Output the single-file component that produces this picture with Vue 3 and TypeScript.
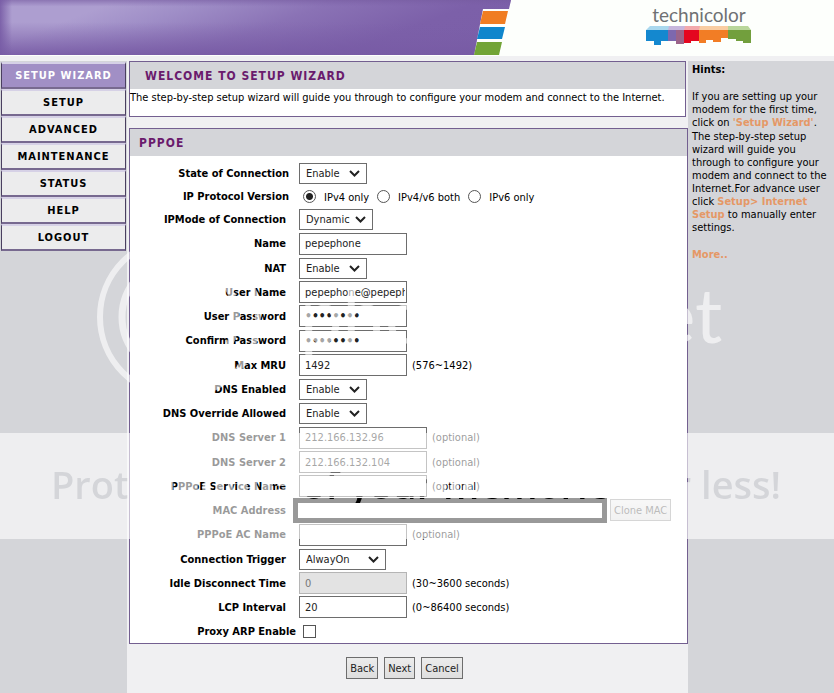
<script setup lang="ts">
import { reactive } from 'vue'

type Kind = 'select' | 'text' | 'password' | 'radio' | 'checkbox' | 'mac'

interface Field {
  id: string
  label: string
  kind: Kind
  size?: 'small' | 'medium' | 'large' | 'wide'
  options?: string[]
  note?: string
  disabled?: boolean
  gap?: 'near' | 'tight'
}

const menu = ['SETUP WIZARD', 'SETUP', 'ADVANCED', 'MAINTENANCE', 'STATUS', 'HELP', 'LOGOUT']

const fields: Field[] = [
  { id: 'state', label: 'State of Connection', kind: 'select', size: 'small', options: ['Enable', 'Disable'], gap: 'near' },
  { id: 'ipver', label: 'IP Protocol Version', kind: 'radio', options: ['IPv4 only', 'IPv4/v6 both', 'IPv6 only'], gap: 'near' },
  { id: 'ipmode', label: 'IPMode of Connection', kind: 'select', size: 'medium', options: ['Dynamic', 'Static'] },
  { id: 'name', label: 'Name', kind: 'text' },
  { id: 'nat', label: 'NAT', kind: 'select', size: 'small', options: ['Enable', 'Disable'] },
  { id: 'user', label: 'User Name', kind: 'text' },
  { id: 'pass', label: 'User Password', kind: 'password' },
  { id: 'confirm', label: 'Confirm Password', kind: 'password' },
  { id: 'mru', label: 'Max MRU', kind: 'text', note: '(576~1492)' },
  { id: 'dns', label: 'DNS Enabled', kind: 'select', size: 'small', options: ['Enable', 'Disable'] },
  { id: 'override', label: 'DNS Override Allowed', kind: 'select', size: 'small', options: ['Enable', 'Disable'] },
  { id: 'dns1', label: 'DNS Server 1', kind: 'text', size: 'wide', note: '(optional)' },
  { id: 'dns2', label: 'DNS Server 2', kind: 'text', size: 'wide', note: '(optional)' },
  { id: 'service', label: 'PPPoE Service Name', kind: 'text', size: 'wide', note: '(optional)' },
  { id: 'mac', label: 'MAC Address', kind: 'mac' },
  { id: 'ac', label: 'PPPoE AC Name', kind: 'text', note: '(optional)' },
  { id: 'trigger', label: 'Connection Trigger', kind: 'select', size: 'large', options: ['AlwayOn', 'Manual'] },
  { id: 'idle', label: 'Idle Disconnect Time', kind: 'text', note: '(30~3600 seconds)', disabled: true },
  { id: 'lcp', label: 'LCP Interval', kind: 'text', note: '(0~86400 seconds)' },
  { id: 'arp', label: 'Proxy ARP Enable', kind: 'checkbox', gap: 'tight' },
]

const values = reactive<Record<string, string>>({
  state: 'Enable',
  ipver: 'IPv4 only',
  ipmode: 'Dynamic',
  name: 'pepephone',
  nat: 'Enable',
  user: 'pepephone@pepephone',
  pass: 'password',
  confirm: 'password',
  mru: '1492',
  dns: 'Enable',
  override: 'Enable',
  dns1: '212.166.132.96',
  dns2: '212.166.132.104',
  service: '',
  mac: '',
  ac: '',
  trigger: 'AlwayOn',
  idle: '0',
  lcp: '20',
})
</script>

<template>
  <div class="page">
    <header class="banner">
      <svg class="swoosh" width="511" height="55" viewBox="0 0 511 55" aria-hidden="true">
        <defs>
          <linearGradient id="base" gradientUnits="userSpaceOnUse" x1="120" y1="0" x2="210" y2="240">
            <stop offset="0" stop-color="#ad9ed0" />
            <stop offset="0.12" stop-color="#9f8ec7" />
            <stop offset="0.3" stop-color="#8a72b5" />
            <stop offset="0.5" stop-color="#7c60a9" />
            <stop offset="1" stop-color="#7a5da6" />
          </linearGradient>
          <linearGradient id="edge" x1="0" y1="0" x2="0" y2="1">
            <stop offset="0" stop-color="#755a9f" stop-opacity="0.6" />
            <stop offset="0.12" stop-color="#7b5fa8" stop-opacity="0" />
            <stop offset="0.4" stop-color="#7b5fa8" stop-opacity="0" />
            <stop offset="1" stop-color="#775aa4" stop-opacity="0.9" />
          </linearGradient>
          <linearGradient id="side" x1="0" y1="0" x2="1" y2="0">
            <stop offset="0" stop-color="#775ba5" stop-opacity="0.9" />
            <stop offset="1" stop-color="#775ba5" stop-opacity="0" />
          </linearGradient>
        </defs>
        <path d="M0 0H511L509 9H483L474 55H0Z" fill="url(#base)" />
        <path d="M0 0H511L509 9H483L474 55H0Z" fill="url(#edge)" />
        <path d="M0 0H12V55H0Z" fill="url(#side)" />
        <path d="M483 11H508L505 24H480Z" fill="#f07d22" />
        <path d="M480 27H505L502 39H477Z" fill="#0f86cc" />
        <path d="M477 42H502L499 55H474Z" fill="#72a436" />
      </svg>
      <div class="brand">
        <span class="brand-name">technicolor</span>
        <svg width="106" height="20" viewBox="0 0 106 20" aria-hidden="true">
          <path d="M4 0H23V4H0Z" fill="#a9d8ee" />
          <path d="M23 0H39V4H22Z" fill="#c7b6dc" />
          <path d="M39 0H54V4H38Z" fill="#f3a9ac" />
          <path d="M54 0H82V4H53Z" fill="#f9cda2" />
          <path d="M82 0H102L105 4H82Z" fill="#b9d69b" />
          <path d="M0 4H22V15H15V19H8V15H0Z" fill="#1488cf" />
          <path d="M22 4H30V15H22Z" fill="#7d68ae" />
          <path d="M30 4H38V18H30Z" fill="#9b6489" />
          <path d="M38 4H53V15H45V17H38Z" fill="#e4061f" />
          <path d="M53 4H82V12H75V16H67V14H60V17H53Z" fill="#f27d25" />
          <path d="M82 4H105V17H97V15H90V13H82Z" fill="#729f3d" />
        </svg>
      </div>
    </header>

    <div class="columns">
      <nav class="side">
        <a v-for="(item, i) in menu" :key="item" href="#" class="side-link" :class="{ current: i === 0 }">{{ item }}</a>
      </nav>

      <main class="content">
        <section class="panel welcome">
          <h1 class="panel-title indent">WELCOME TO SETUP WIZARD</h1>
          <p class="intro">The step-by-step setup wizard will guide you through to configure your modem and connect to the Internet.</p>
        </section>

        <form class="settings" @submit.prevent>
          <section class="panel">
            <h2 class="panel-title">PPPOE</h2>
            <div class="rows">
              <div v-for="f in fields" :key="f.id" class="row" :class="f.kind">
                <span v-if="f.kind === 'radio'" class="label" :class="f.gap">{{ f.label }}</span>
                <label v-else class="label" :class="f.gap" :for="f.id">{{ f.label }}</label>

                <span v-if="f.kind === 'select'" class="drop" :class="f.size">
                  <select :id="f.id" v-model="values[f.id]">
                    <option v-for="o in f.options" :key="o">{{ o }}</option>
                  </select>
                  <svg class="chevron" width="11" height="7" viewBox="0 0 11 7" aria-hidden="true">
                    <path d="M1 1L5.500 5.500L10 1" fill="none" stroke="#222" stroke-width="2" />
                  </svg>
                </span>

                <span v-else-if="f.kind === 'radio'" class="choices">
                  <label v-for="o in f.options" :key="o" class="choice">
                    <input v-model="values[f.id]" type="radio" :name="f.id" :value="o" />
                    <span>{{ o }}</span>
                  </label>
                </span>

                <input v-else-if="f.kind === 'checkbox'" :id="f.id" type="checkbox" class="tick" />

                <template v-else-if="f.kind === 'mac'">
                  <input :id="f.id" v-model="values[f.id]" type="text" class="mac-box" />
                  <button type="button" class="button clone" disabled>Clone MAC</button>
                </template>

                <input v-else :id="f.id" v-model="values[f.id]" :type="f.kind" class="box" :class="f.size" :disabled="f.disabled" />

                <span v-if="f.note" class="note">{{ f.note }}</span>
              </div>
            </div>
          </section>

          <div class="actions">
            <button type="button" class="button">Back</button>
            <button type="submit" class="button">Next</button>
            <button type="button" class="button">Cancel</button>
          </div>
        </form>
      </main>

      <aside class="hints">
        <h2>Hints:</h2>
        <p>If you are setting up your<br />modem for the first time,<br />click on <a href="#">'Setup Wizard'</a>.</p>
        <p>
          The step-by-step setup<br />wizard will guide you<br />through to configure your<br />modem and connect to the<br />Internet.For advance user<br />click
          <a href="#">Setup&gt; Internet<br />Setup</a> to manually enter<br />settings.
        </p>
        <p class="more"><a href="#">More..</a></p>
      </aside>
    </div>

    <svg class="watermark" width="100%" height="100%" aria-hidden="true">
      <defs>
        <mask id="cutout">
          <rect width="100%" height="100%" fill="#fff" />
          <text x="51" y="499" class="slogan">Protect more of your memories for less!</text>
        </mask>
      </defs>
      <rect y="433" width="100%" height="106" fill="#fff" fill-opacity="0.6" mask="url(#cutout)" />
      <g fill="none" stroke="#fff" stroke-opacity="0.6">
        <circle cx="179" cy="317" r="79" stroke-width="6" />
        <circle cx="179" cy="317" r="57" stroke-width="7" />
      </g>
      <text x="300" y="343" class="wordmark">photobucket</text>
    </svg>
  </div>
</template>

<style>
body {
  margin: 0;
  background: #f0f0f2;
}
</style>

<style scoped>
.page {
  position: relative;
  display: flex;
  flex-direction: column;
  min-height: 100vh;
  overflow: hidden;
  color: #000;
  font-family: "DejaVu Sans Condensed", "DejaVu Sans", sans-serif;
  font-size: 11px;
  line-height: 13px;
}

.banner {
  display: flex;
  justify-content: space-between;
  height: 56px;
  background: #fdfffc;
}

.swoosh {
  flex: none;
}

.brand {
  display: flex;
  flex-direction: column;
  align-items: center;
  padding: 4px 82px 0 0;
}

.brand-name {
  color: #6f7173;
  font-family: Lato, sans-serif;
  font-size: 19px;
  line-height: 22px;
}

.columns {
  display: flex;
  flex: 1;
  padding-top: 5px;
}

.side {
  display: flex;
  flex-direction: column;
  flex: none;
  box-sizing: border-box;
  width: 127px;
  padding: 1px 1px 0;
  background: #d4d5d9;
}

.side-link {
  box-sizing: border-box;
  height: 27px;
  border: 1px solid #4a3f60;
  border-top: 2px solid #d6d1e6;
  border-bottom: 2px solid #77698f;
  background: #ececed;
  color: #000;
  font-weight: bold;
  letter-spacing: 1px;
  line-height: 23px;
  text-align: center;
  text-decoration: none;
}

.side-link.current {
  background: #a18fc5;
  color: #fff;
}

.content {
  flex: 1;
  min-width: 0;
  padding-left: 2px;
}

.panel {
  border: 1px solid #735f90;
  background: #fff;
}

.welcome {
  margin: 0 2px 11px 0;
}

.panel-title {
  margin: 0;
  padding: 2px 0 0 9px;
  background: #d4d5d9;
  color: #6a1b6d;
  font-size: 12px;
  font-weight: bold;
  letter-spacing: 1px;
  line-height: 25px;
}

.panel-title.indent {
  padding-left: 15px;
}

.intro {
  margin: 0;
  padding: 2px 0 12px;
}

.rows {
  padding-top: 5px;
}

.row {
  display: flex;
  align-items: center;
  height: 24px;
}

.row:nth-child(4n) {
  height: 25px;
}

.row.radio {
  height: 22px;
}

.row.checkbox {
  height: 24px;
}

.label {
  flex: none;
  box-sizing: border-box;
  width: 169px;
  padding-right: 13px;
  font-weight: bold;
  text-align: right;
  white-space: nowrap;
}

.label.near {
  padding-right: 10px;
}

.label.tight {
  padding-right: 3px;
}

.drop {
  position: relative;
  width: 68px;
  height: 21px;
}

.drop.medium {
  width: 74px;
}

.drop.large {
  width: 87px;
}

select,
.box,
.mac-box,
.button {
  box-sizing: border-box;
  margin: 0;
  border: 1px solid #6d6d6d;
  border-radius: 0;
  background: #fff;
  color: #222;
  font: inherit;
}

select {
  appearance: none;
  width: 100%;
  height: 100%;
  padding: 0 0 0 6px;
}

.chevron {
  position: absolute;
  top: 7px;
  right: 7px;
  pointer-events: none;
}

.box {
  width: 108px;
  height: 22px;
  padding: 0 1px 0 5px;
}

.box.wide {
  width: 128px;
}

.box[type="password"] {
  font-size: 12px;
  font-weight: bold;
}

.box:disabled {
  border-color: #b5b5b5;
  background: #e3e3e3;
  color: #777;
}

.mac-box {
  width: 314px;
  height: 25px;
  margin-left: -6px;
  border: 5px solid #000;
}

.note {
  margin-left: 5px;
}

.choices {
  display: flex;
}

.choice {
  display: flex;
  align-items: center;
  margin-right: 8px;
}

.choice span {
  padding: 2px 0 0 8px;
}

.choice input,
.tick {
  appearance: none;
  flex: none;
  box-sizing: border-box;
  width: 13px;
  height: 13px;
  margin: 0 0 0 4px;
  border: 1px solid #555;
  background: #fff;
}

.choice input {
  border-radius: 50%;
}

.choice + .choice input {
  margin-left: 0;
}

.choice input:checked {
  background: radial-gradient(circle, #222 3px, #fff 4px);
}

.tick:checked {
  background: #333;
}

.actions {
  display: flex;
  justify-content: center;
  gap: 6px;
  padding: 13px 8px 14px 0;
}

.button {
  height: 22px;
  padding: 0 3px;
  background: linear-gradient(#ececec, #dedede);
}

.clone {
  margin-left: 3px;
  border-color: #999;
  color: #555;
}

.hints {
  flex: none;
  box-sizing: border-box;
  width: 146px;
  padding: 2px 0 0 4px;
  background: #d4d5d9;
}

.hints h2 {
  margin: 0 0 14px;
  font-size: 11px;
}

.hints p {
  margin: 0 0 1px;
  white-space: nowrap;
}

.hints .more {
  margin-top: 14px;
}

.hints a {
  color: #e59866;
  font-weight: bold;
  text-decoration: none;
}

.watermark {
  position: absolute;
  inset: 0;
  pointer-events: none;
}

.slogan {
  fill: #000;
  font-family: "Open Sans", sans-serif;
  font-size: 38px;
  font-weight: 600;
}

.wordmark {
  fill: #fff;
  fill-opacity: 0.6;
  font-family: Lato, sans-serif;
  font-size: 76px;
}
</style>
